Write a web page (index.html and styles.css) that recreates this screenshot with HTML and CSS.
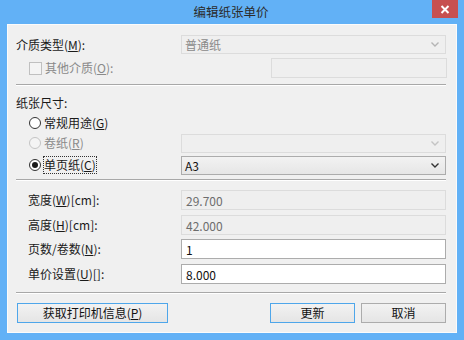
FILE: index.html
```html
<!DOCTYPE html>
<html lang="zh-CN">
<head>
<meta charset="utf-8">
<title>编辑纸张单价</title>
<link rel="stylesheet" href="styles.css">
</head>
<body>
<div class="window">
  <div class="titlebar">
    <span class="title">编辑纸张单价</span>
    <div class="close"><svg width="10" height="9" viewBox="0 0 10 9"><path d="M1.5 1 L8.5 8 M8.5 1 L1.5 8" stroke="#fff" stroke-width="2"/></svg></div>
  </div>
  <div class="client">
    <div class="row r-media">
      <span class="label">介质类型(<u>M</u>):</span>
      <div class="combo disabled"><span class="val">普通纸</span><svg class="chev" width="8" height="5" viewBox="0 0 8 5"><path d="M0.5 0.5 L4 4 L7.5 0.5" fill="none" stroke="#b4b4b4" stroke-width="1.4"/></svg></div>
    </div>
    <div class="row r-other">
      <span class="check"></span>
      <span class="label dim">其他介质(<u>O</u>):</span>
      <div class="field other"></div>
    </div>
    <div class="sep s1"></div>
    <div class="row r-head"><span class="label">纸张尺寸:</span></div>
    <div class="row r-radio1">
      <span class="radio"></span><span class="label">常规用途(<u>G</u>)</span>
    </div>
    <div class="row r-radio2">
      <span class="radio off"></span><span class="label dim">卷纸(<u>R</u>)</span>
      <div class="combo disabled"><span class="val"></span><svg class="chev" width="8" height="5" viewBox="0 0 8 5"><path d="M0.5 0.5 L4 4 L7.5 0.5" fill="none" stroke="#c4c4c4" stroke-width="1.4"/></svg></div>
    </div>
    <div class="row r-radio3">
      <span class="radio on"></span><span class="label focus">单页纸(<u>C</u>)</span>
      <div class="combo active"><span class="val">A3</span><svg class="chev" width="8" height="5" viewBox="0 0 8 5"><path d="M0.5 0.5 L4 4 L7.5 0.5" fill="none" stroke="#333" stroke-width="1.4"/></svg></div>
    </div>
    <div class="sep s2"></div>
    <div class="row frow f1">
      <span class="label">宽度(<u>W</u>)[cm]:</span>
      <div class="field ro">29.700</div>
    </div>
    <div class="row frow f2">
      <span class="label">高度(<u>H</u>)[cm]:</span>
      <div class="field ro">42.000</div>
    </div>
    <div class="row frow f3">
      <span class="label">页数/卷数(<u>N</u>):</span>
      <div class="field edit">1</div>
    </div>
    <div class="row frow f4">
      <span class="label">单价设置(<u>U</u>)[]:</span>
      <div class="field edit">8.000</div>
    </div>
    <div class="sep s3"></div>
    <div class="buttons">
      <button class="btn blue wide">获取打印机信息(<u>P</u>)</button>
      <span class="spacer"></span>
      <button class="btn blue">更新</button>
      <button class="btn">取消</button>
    </div>
  </div>
</div>
</body>
</html>
```

FILE: styles.css
```css
html, body {
  margin: 0;
  padding: 0;
}
body {
  width: 464px;
  height: 340px;
  overflow: hidden;
  font-family: "Noto Sans CJK SC", "Noto Sans", sans-serif;
  font-size: 12px;
  color: #1a1a1a;
}
u { text-decoration: underline; text-underline-offset: 1px; }
.window {
  width: 464px;
  height: 340px;
  background: #62b1f6;
  display: flex;
  flex-direction: column;
}
.titlebar {
  height: 24px;
  position: relative;
  display: flex;
  align-items: center;
  justify-content: center;
}
.title {
  font-size: 12.5px;
  color: #2b2b2b;
  margin-top: -1px;
  margin-left: -2px;
}
.close {
  position: absolute;
  top: 0;
  right: 6px;
  width: 26px;
  height: 18px;
  background: #c75050;
  display: flex;
  align-items: center;
  justify-content: center;
}
.client {
  margin: 0 7px;
  height: 309px;
  background: #f0f0f0;
  border: 1px solid #fbfbfb;
  box-sizing: border-box;
  padding: 10px 10px 0 8px;
  display: flex;
  flex-direction: column;
}
.row {
  display: flex;
  align-items: center;
  height: 20px;
  position: relative;
  white-space: nowrap;
}
.label { line-height: 16px; }
.dim { color: #8a8a8a; }
.combo, .field {
  box-sizing: border-box;
  height: 19px;
  margin-left: auto;
  width: 265px;
  display: flex;
  align-items: center;
  padding-left: 3px;
}
.combo .val { flex: 1; }
.combo .chev { margin-right: 6px; }
.combo.disabled {
  background: #efefef;
  border: 1px solid #dcdcdc;
  color: #8a8a8a;
}
.combo.active {
  background: linear-gradient(#f2f2f2, #e6e6e6);
  border: 1px solid #acacac;
  color: #111;
}
.r-media { height: 19px; }
.r-other { margin-top: 4px; }
.check {
  width: 11px;
  height: 11px;
  border: 1px solid #c0c0c0;
  background: #f4f4f4;
  margin-left: 13px;
  margin-right: 3px;
}
.field.other {
  width: 176px;
  height: 20px;
  background: #efefef;
  border: 1px solid #dcdcdc;
  margin-right: -1px;
}
.sep {
  border-top: 1px solid #a8a8a8;
  border-bottom: 1px solid #ffffff;
  height: 0;
}
.s1 { margin-top: 6px; }
.r-head { margin-top: 8px; height: 18px; }
.radio {
  box-sizing: border-box;
  width: 12px;
  height: 12px;
  border-radius: 50%;
  border: 1px solid #333;
  background: #fff;
  margin-left: 13px;
  margin-right: 3px;
  display: flex;
  align-items: center;
  justify-content: center;
}
.radio.off {
  border-color: #c4c4c4;
  background: #f4f4f4;
}
.radio.on::after {
  content: "";
  width: 6px;
  height: 6px;
  border-radius: 50%;
  background: #1a1a1a;
}
.r-radio1 { margin-top: 1px; }
.r-radio2 { margin-top: 0; }
.r-radio3 { margin-top: 2px; }
.focus {
  outline: 1px dotted #333;
  outline-offset: 0;
}
.s2 { margin-top: 4px; }
.frow .label { margin-left: 12px; }
.field {
  height: 20px;
  padding-left: 4px;
}
.field.ro {
  background: #efefef;
  border: 1px solid #dcdcdc;
  color: #6d6d6d;
}
.field.edit {
  background: #fff;
  border: 1px solid #acacac;
  color: #111;
}
.f1 { margin-top: 9px; }
.f2 { margin-top: 5px; }
.f3 { margin-top: 4px; }
.f4 { margin-top: 5px; }
.s3 { margin-top: 8px; }
.buttons {
  display: flex;
  margin-top: 9px;
  gap: 6px;
}
.spacer { flex: 1; }
.btn {
  font-family: inherit;
  font-size: 12px;
  color: #111;
  height: 20px;
  width: 85px;
  padding: 0;
  box-sizing: border-box;
  border: 1px solid #acacac;
  background: linear-gradient(#f2f2f2, #e5e5e5);
  line-height: 16px;
}
.btn.blue {
  border-color: #4ea6ea;
}
.btn.wide {
  width: 151px;
  margin-left: 1px;
}
```
